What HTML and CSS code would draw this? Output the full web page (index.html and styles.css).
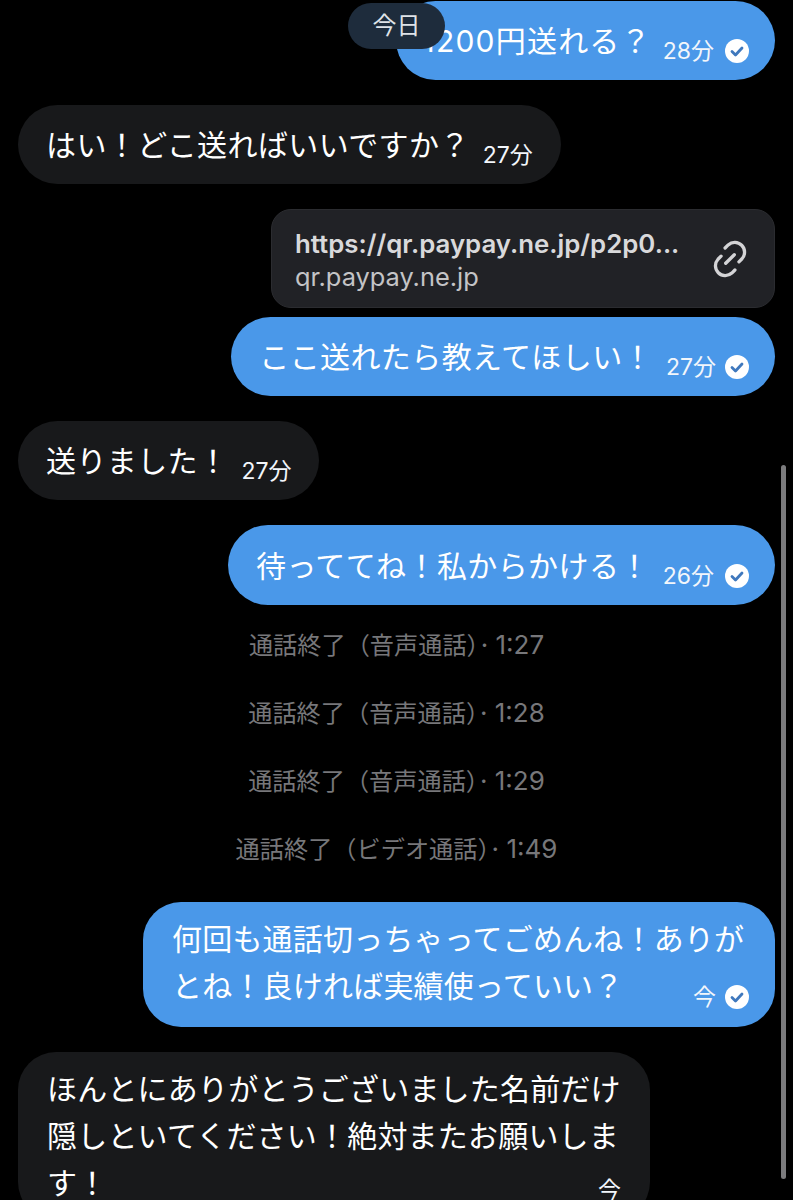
FILE: index.html
```html
<!DOCTYPE html>
<html lang="ja">
<head>
    <meta charset="utf-8">
    <title>チャット</title>
    <link rel="stylesheet" href="styles.css">
</head>
<body>
    <div class="today">今日</div>
    <div class="scrollbar"></div>

    <div class="chat">
        <div class="bubble mine first">
            <span class="text">1200円送れる？</span>
            <span class="meta">28分<svg class="check" viewBox="0 0 24 24"><circle cx="12" cy="12" r="12" fill="#fff"/><path d="M7 12.5l3.5 3.5 6.5-7" fill="none" stroke="#3f78bd" stroke-width="2.8" stroke-linecap="round" stroke-linejoin="round"/></svg></span>
        </div>

        <div class="bubble theirs">
            <span class="text">はい！どこ送ればいいですか？</span>
            <span class="meta">27分</span>
        </div>

        <div class="link-card">
            <div class="link-text">
                <div class="link-url">https://qr.paypay.ne.jp/p2p0...</div>
                <div class="link-host">qr.paypay.ne.jp</div>
            </div>
            <svg class="link-icon" viewBox="0.5 0.5 31 31" fill="none" stroke="#d4d4d6" stroke-width="2.7" stroke-linecap="round"><path d="M12 7l2.5-2.5a8 8 0 0 1 11.3 11.3l-2.5 2.5"/><path d="M20 25l-2.5 2.5a8 8 0 0 1-11.3-11.3l2.5-2.5"/><path d="M12.5 19.5l7-7"/></svg>
        </div>

        <div class="bubble mine">
            <span class="text">ここ送れたら教えてほしい！</span>
            <span class="meta">27分<svg class="check" viewBox="0 0 24 24"><circle cx="12" cy="12" r="12" fill="#fff"/><path d="M7 12.5l3.5 3.5 6.5-7" fill="none" stroke="#3f78bd" stroke-width="2.8" stroke-linecap="round" stroke-linejoin="round"/></svg></span>
        </div>

        <div class="bubble theirs">
            <span class="text">送りました！</span>
            <span class="meta">27分</span>
        </div>

        <div class="bubble mine tall">
            <span class="text">待っててね！私からかける！</span>
            <span class="meta">26分<svg class="check" viewBox="0 0 24 24"><circle cx="12" cy="12" r="12" fill="#fff"/><path d="M7 12.5l3.5 3.5 6.5-7" fill="none" stroke="#3f78bd" stroke-width="2.8" stroke-linecap="round" stroke-linejoin="round"/></svg></span>
        </div>

        <div class="calls">
            <div class="call">通話終了（音声通話）<span class="time">· 1:27</span></div>
            <div class="call">通話終了（音声通話）<span class="time">· 1:28</span></div>
            <div class="call">通話終了（音声通話）<span class="time">· 1:29</span></div>
            <div class="call">通話終了（ビデオ通話）<span class="time">· 1:49</span></div>
        </div>

        <div class="bubble mine long">
            <div class="text">何回も通話切っちゃってごめんね！ありがとね！良ければ実績使っていい？</div>
            <span class="meta meta-end">今<svg class="check" viewBox="0 0 24 24"><circle cx="12" cy="12" r="12" fill="#fff"/><path d="M7 12.5l3.5 3.5 6.5-7" fill="none" stroke="#3f78bd" stroke-width="2.8" stroke-linecap="round" stroke-linejoin="round"/></svg></span>
        </div>

        <div class="bubble theirs long last">
            <div class="text">ほんとにありがとうございました名前だけ隠しといてください！絶対またお願いします！</div>
            <span class="meta meta-end">今</span>
        </div>
    </div>
</body>
</html>
```

FILE: styles.css
```css
html, body {
    margin: 0;
    padding: 0;
}

body {
    width: 793px;
    height: 1200px;
    overflow: hidden;
    position: relative;
    background-color: #000;
    color: #fff;
    font-family: "Inter", "Noto Sans CJK JP", sans-serif;
}

.chat {
    display: flex;
    flex-direction: column;
    align-items: flex-start;
    padding: 1px 18px 0 18px;
}

.today {
    position: absolute;
    left: 348px;
    top: 3px;
    width: 97px;
    height: 46px;
    line-height: 46px;
    text-align: center;
    border-radius: 23px;
    background-color: #1e2c3c;
    color: #dfe3e8;
    font-size: 24px;
}

.scrollbar {
    position: absolute;
    left: 781px;
    top: 465px;
    width: 5px;
    height: 714px;
    border-radius: 3px;
    background-color: #7c7c7e;
}

.bubble {
    display: flex;
    align-items: flex-end;
    height: 79px;
    box-sizing: border-box;
    padding: 0 28px;
    margin-bottom: 25px;
    border-radius: 40px;
}

.mine {
    align-self: flex-end;
    padding-right: 26px;
    background-color: #4a98e9;
}

.theirs {
    background-color: #18191b;
}

.tall {
    height: 80px;
}

.tall .check {
    margin-left: 11px;
}

.text {
    font-size: 30px;
    letter-spacing: 0.4px;
    line-height: 50px;
    margin-bottom: 14px;
}

.meta {
    display: flex;
    align-items: center;
    font-size: 23px;
    line-height: 30px;
    margin-left: 13px;
    margin-bottom: 14px;
    color: #f2f6fb;
}

.check {
    width: 24px;
    height: 24px;
    margin-left: 9px;
}

.first {
    padding-left: 27px;
}

.first .text {
    letter-spacing: 1.2px;
}

.first .meta {
    margin-left: 11px;
}

.first .check {
    margin-left: 11px;
}

.link-card {
    align-self: flex-end;
    display: flex;
    align-items: center;
    justify-content: space-between;
    width: 504px;
    height: 99px;
    box-sizing: border-box;
    padding: 2px 25px 0 23px;
    margin-bottom: 9px;
    border: 1px solid #2b2c30;
    border-radius: 20px;
    background-color: #212226;
}

.link-url {
    font-size: 25.8px;
    font-weight: 600;
    line-height: 33px;
    color: #d9d9db;
}

.link-host {
    font-size: 25.4px;
    line-height: 33px;
    color: #c4c4c6;
}

.link-icon {
    width: 38px;
    height: 38px;
    margin-top: -2px;
}

.calls {
    align-self: stretch;
    display: flex;
    flex-direction: column;
    align-items: center;
    gap: 30px;
    margin-top: -4px;
    margin-bottom: 34px;
}

.call {
    height: 38px;
    font-size: 24.2px;
    line-height: 38px;
    color: #77777a;
}

.time {
    font-size: 26px;
    margin-left: 2px;
}

.long {
    display: block;
    width: 632px;
    height: 125px;
    padding: 14px 20px 0 29px;
    border-radius: 38px;
    position: relative;
}

.long .text {
    line-height: 47px;
    letter-spacing: 0.2px;
    margin-bottom: 0;
}

.meta-end {
    position: absolute;
    right: 26px;
    bottom: 15px;
    margin: 0;
}

.last {
    height: 168px;
    margin-bottom: 0;
}

.last .meta-end {
    right: 29px;
}
```
